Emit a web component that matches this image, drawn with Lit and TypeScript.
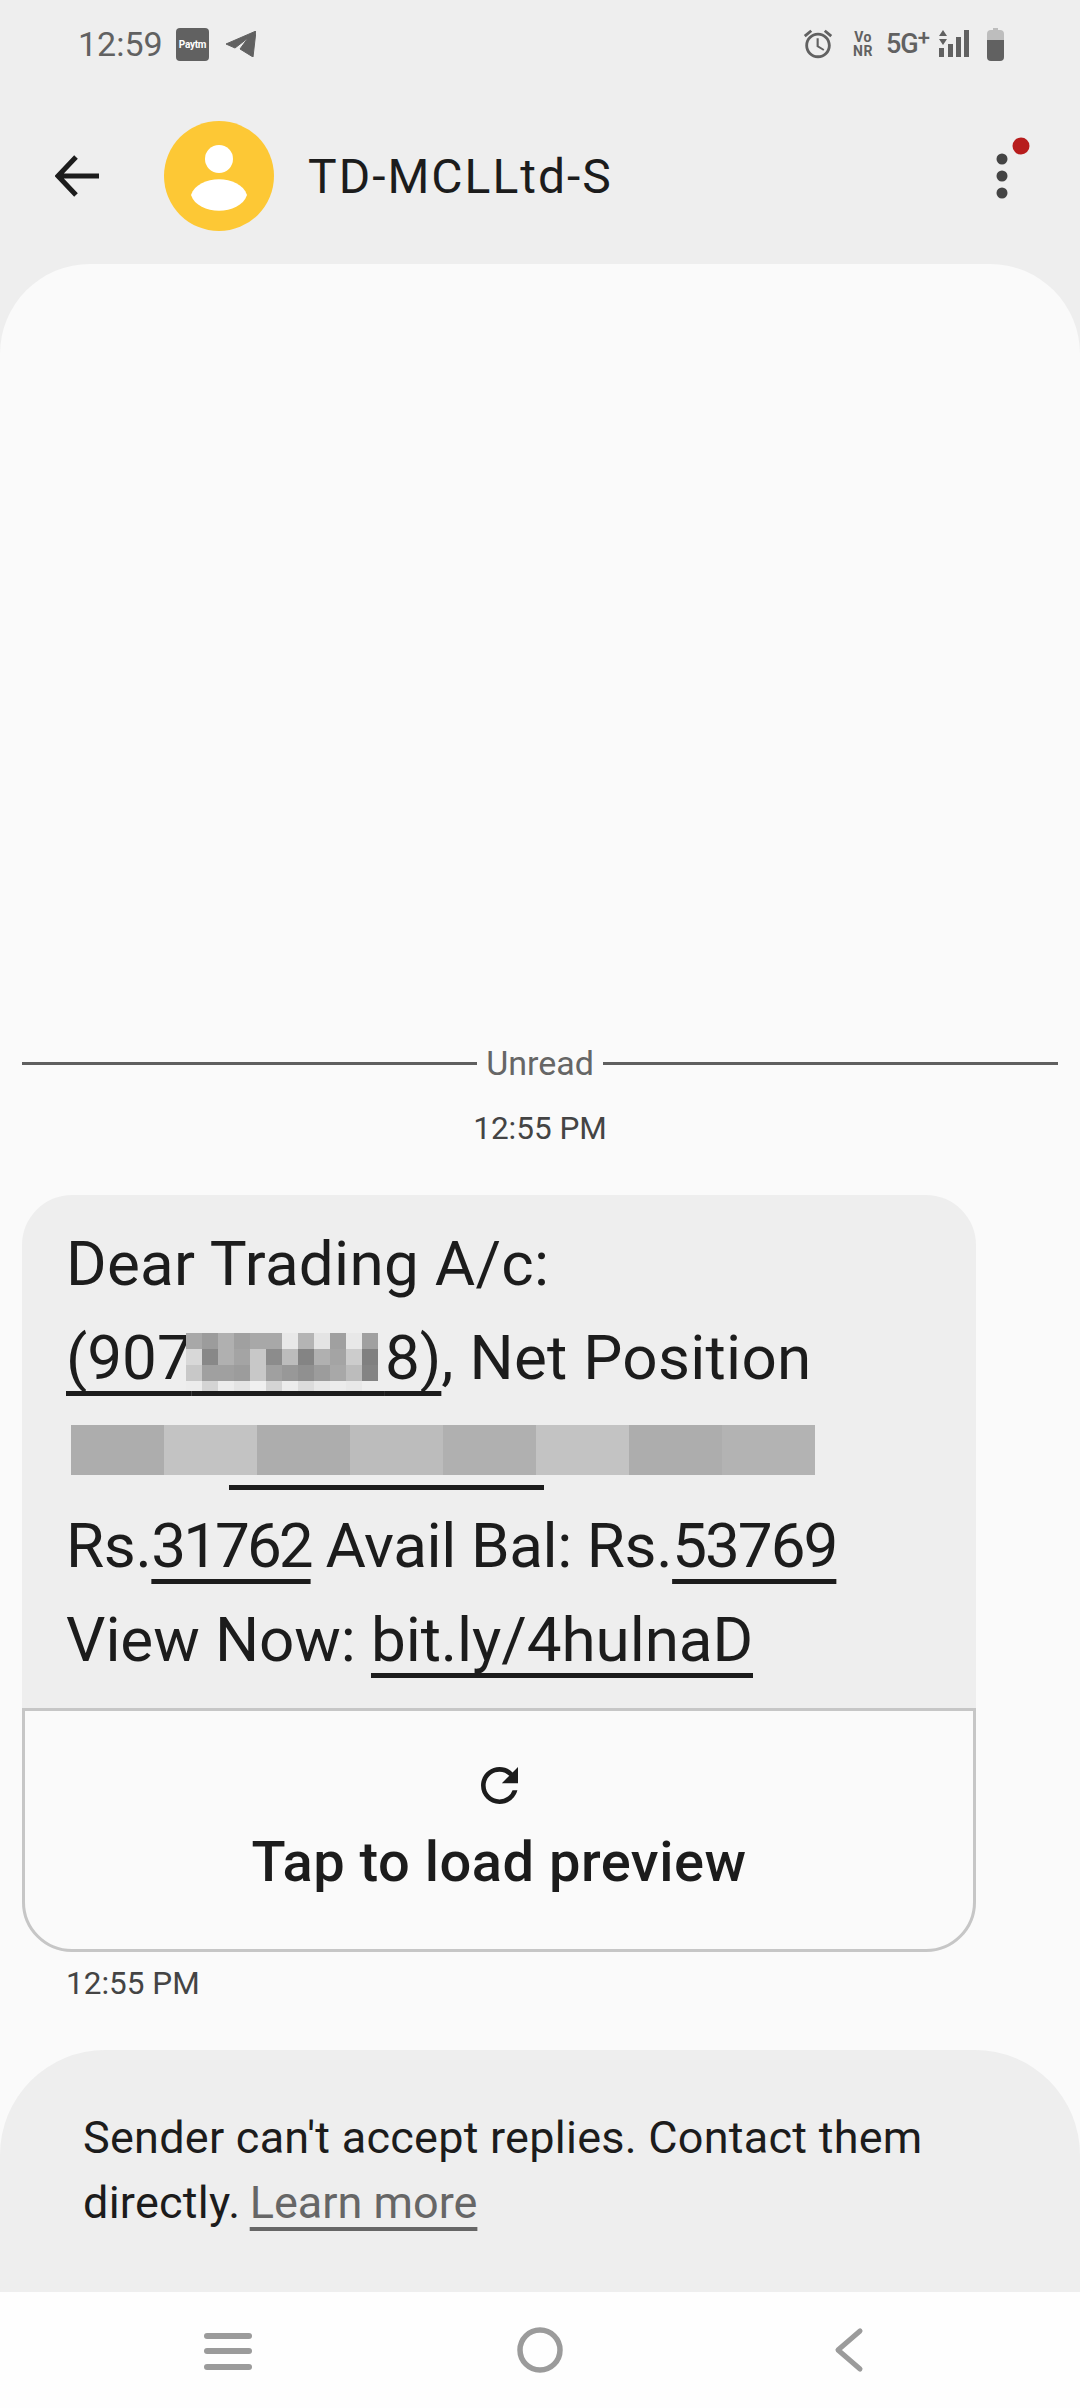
import { LitElement, html, css, svg } from "lit";
import { customElement } from "lit/decorators.js";

const PHONE_MOSAIC = [
  ["a8", "9c", "b0", "a0", "a8", "a8", "e8", "b4", "e4", "a0", "e8", "a0"],
  ["d8", "88", "b0", "a4", "c8", "8c", "bc", "84", "b0", "a4", "cc", "80"],
  ["c8", "a0", "a0", "9c", "c8", "a0", "98", "90", "9c", "a8", "bc", "84"],
  ["ec", "d4", "ec", "e4", "f0", "d4", "ec", "dc", "e8", "ec", "e8", "ee"],
];
const NET_MOSAIC = ["ad", "c3", "ad", "bc", "b0", "c3", "ad", "b3"];

const grey = (h: string) => `#${h}${h}${h}`;

@customElement("app-root")
export class AppRoot extends LitElement {
  static styles = css`
    :host {
      display: block;
      width: 1080px;
      height: 2408px;
      font-family: "Roboto", "Liberation Sans", sans-serif;
      color: #1c1c1c;
      background: #eeeeee;
    }
    .page {
      display: flex;
      flex-direction: column;
      height: 2408px;
    }
    svg {
      display: block;
      flex: none;
    }

    /* status bar */
    .status {
      height: 88px;
      display: flex;
      align-items: center;
      padding: 0 76px 0 78px;
      color: #616161;
    }
    .clock {
      font-size: 34px;
      width: 98px;
    }
    .paytm {
      width: 33px;
      height: 33px;
      border-radius: 4px;
      background: #616161;
      color: #fff;
      font-size: 10px;
      font-weight: 700;
      letter-spacing: -0.3px;
      display: flex;
      align-items: center;
      justify-content: center;
      margin-right: 17px;
    }
    .sys {
      margin-left: auto;
      display: flex;
      align-items: center;
    }
    .spacer {
      width: 18px;
    }
    .vonr {
      font-size: 14px;
      font-weight: 700;
      line-height: 14px;
      letter-spacing: 0.5px;
      text-align: center;
      margin: 0 12px 0 17px;
      width: 22px;
    }
    .vonr span {
      display: block;
    }
    .fiveg {
      font-size: 27px;
      font-weight: 500;
      letter-spacing: -1px;
      width: 42px;
      margin-right: 10px;
      white-space: nowrap;
    }
    .fiveg sup {
      font-size: 22px;
      line-height: 0;
      vertical-align: 8px;
    }

    /* header */
    .head {
      height: 176px;
      display: flex;
      align-items: center;
      padding-left: 55px;
    }
    .avatar {
      width: 110px;
      height: 110px;
      margin-left: 65px;
    }
    .title {
      font-size: 48px;
      margin-left: 34px;
      letter-spacing: 2px;
    }
    .menu {
      margin-left: auto;
      margin-right: 47px;
    }

    /* thread */
    .main {
      flex: 1;
      display: flex;
      flex-direction: column;
      background: #fafafa;
      border-radius: 90px 90px 0 0;
    }
    .thread {
      flex: 1;
      padding: 0 22px;
      display: flex;
      flex-direction: column;
      justify-content: flex-end;
      padding-bottom: 46px;
    }
    .divider {
      display: flex;
      align-items: center;
      gap: 9px;
      font-size: 34px;
      color: #666;
      line-height: 40px;
    }
    .divider i {
      flex: 1;
      height: 3px;
      background: #5f5f5f;
    }
    .stamp {
      font-size: 31.5px;
      color: #444;
      line-height: 40px;
      text-align: center;
      margin-top: 26px;
    }
    .bubble {
      width: 954px;
      margin-top: 46px;
      background: #eeeeee;
      border-radius: 50px;
    }
    .body {
      padding: 22px 30px 21px 44px;
      font-size: 62px;
      line-height: 94px;
    }
    .line {
      white-space: nowrap;
    }
    .wide {
      letter-spacing: 0.27px;
    }
    .tight {
      letter-spacing: -0.4px;
    }
    .snug {
      letter-spacing: -0.1px;
    }
    .link {
      text-decoration: underline;
      text-decoration-thickness: 5px;
      text-underline-offset: 12px;
      text-decoration-skip-ink: none;
    }
    .digits {
      letter-spacing: -3px;
    }
    .digits.loose {
      letter-spacing: -2px;
    }
    .masked {
      position: relative;
    }
    .gap {
      word-spacing: 49px;
    }
    .mosaic {
      position: absolute;
      left: 120px;
      top: 12px;
      display: grid;
      grid-template-columns: repeat(12, 16px);
      grid-template-rows: 16px 16px 16px 10px;
    }
    .redacted {
      height: 94px;
      padding-top: 20px;
      box-sizing: border-box;
    }
    .strip {
      display: flex;
      width: 744px;
      height: 50px;
      margin-left: 5px;
    }
    .strip i {
      flex: 1;
    }
    .bar {
      width: 315px;
      height: 5px;
      margin: 10px 0 0 163px;
      background: #1c1c1c;
    }
    .preview {
      box-sizing: border-box;
      height: 244px;
      background: #fafafa;
      border: 3px solid #c6c6c6;
      border-radius: 0 0 50px 50px;
      display: flex;
      flex-direction: column;
      align-items: center;
      padding-top: 56px;
    }
    .preview b {
      font-size: 56px;
      font-weight: 500;
      letter-spacing: 0.5px;
      line-height: 64px;
      margin-top: 26px;
    }
    .sent {
      font-size: 31.5px;
      color: #444;
      line-height: 40px;
      margin: 12px 0 0 44px;
    }

    /* reply notice */
    .notice {
      height: 242px;
      box-sizing: border-box;
      background: #eeeeee;
      border-radius: 105px 105px 0 0;
      padding: 55px 83px 0;
      font-size: 45px;
      letter-spacing: 0.25px;
      line-height: 65px;
    }
    .notice a {
      color: #666;
      letter-spacing: 0;
      margin-left: -2px;
      text-decoration: underline;
      text-decoration-thickness: 4px;
      text-underline-offset: 9px;
      text-decoration-skip-ink: none;
    }

    /* nav */
    .nav {
      height: 116px;
      background: #fefefe;
    }
    .nav svg {
      width: 1080px;
      height: 116px;
    }
  `;

  private icon(w: number, h: number, box: string, body: unknown) {
    return html`<svg width=${w} height=${h} viewBox=${box}>${body}</svg>`;
  }

  render() {
    return html`
      <div class="page">
        <div class="status">
          <span class="clock">12:59</span>
          <span class="paytm">Paytm</span>
          ${this.icon(30, 26, "0 0 30 26", svg`<path d="M0 13 30 0 27 26 14 18 22 7 9 17Z" fill="#616161" stroke="#616161" stroke-width="1" stroke-linejoin="round" />`)}
          <div class="sys">
            ${this.icon(34, 34, "0 0 24 24", svg`<path fill="#616161" d="M22 5.72l-4.6-3.86-1.29 1.53 4.6 3.86L22 5.72zM7.88 3.39L6.6 1.86 2 5.71l1.29 1.53 4.59-3.85zM12.5 8H11v6l4.75 2.85.75-1.23-4-2.37V8zM12 4c-4.97 0-9 4.03-9 9s4.03 9 9 9 9-4.03 9-9-4.03-9-9-9zm0 16c-3.87 0-7-3.13-7-7s3.13-7 7-7 7 3.13 7 7-3.13 7-7 7z" />`)}
            <div class="vonr"><span>Vo</span><span>NR</span></div>
            <span class="fiveg">5G<sup>+</sup></span>
            ${this.icon(31, 28, "0 0 31 28", svg`<g fill="#616161"><path d="M5 0 9 6H1ZM1 9H9L5 15ZM1 18H6V27H1ZM10 14H15V27H10ZM18 7H23V27H18ZM26 0H31V27H26Z" /></g>`)}
            <span class="spacer"></span>
            ${this.icon(17, 33, "0 0 17 33", svg`<path fill="#bdbdbd" d="M6 0H11V2H13A4 4 0 0 1 17 6V12H0V6A4 4 0 0 1 4 2H6Z" /><path fill="#616161" d="M0 12H17V29A4 4 0 0 1 13 33H4A4 4 0 0 1 0 29Z" />`)}
          </div>
        </div>

        <div class="head">
          ${this.icon(44, 44, "0 0 44 44", svg`<path d="M44 22H4M21 3 3 22 21 41" fill="none" stroke="#1c1c1c" stroke-width="5" />`)}
          <div class="avatar">
            ${this.icon(110, 110, "0 0 110 110", svg`<circle cx="55" cy="55" r="55" fill="#fdc835" /><circle cx="55" cy="38" r="14" fill="#fff" /><path d="M27 74C34 53 76 53 83 74 76 95 34 95 27 74Z" fill="#fff" />`)}
          </div>
          <span class="title">TD-MCLLtd-S</span>
          <div class="menu">
            ${this.icon(40, 80, "0 0 40 80", svg`<g fill="#444"><circle cx="9" cy="23" r="5.5" /><circle cx="9" cy="40" r="5.5" /><circle cx="9" cy="57" r="5.5" /></g><circle cx="28" cy="10" r="8.5" fill="#b71c1c" />`)}
          </div>
        </div>

        <div class="main">
          <div class="thread">
            <div class="divider"><i></i><span>Unread</span><i></i></div>
            <div class="stamp">12:55 PM</div>
            <div class="bubble">
              <div class="body">
                <div class="line wide">Dear Trading A/c:</div>
                <div class="line">
                  <span class="link masked"
                    >(907<span class="gap">&nbsp; &nbsp;</span>8)<span class="mosaic">
                      ${PHONE_MOSAIC.flat().map((c) => html`<i style="background:${grey(c)}"></i>`)}
                    </span></span
                  ><span class="wide">, Net Position</span>
                </div>
                <div class="redacted">
                  <div class="strip">
                    ${NET_MOSAIC.map((c) => html`<i style="background:${grey(c)}"></i>`)}
                  </div>
                  <div class="bar"></div>
                </div>
                <div class="line tight">
                  Rs.<span class="link digits">31762</span> Avail Bal: Rs.<span class="link digits loose">53769</span>
                </div>
                <div class="line snug">View Now: <span class="link">bit.ly/4hulnaD</span></div>
              </div>
              <div class="preview">
                ${this.icon(37, 37, "4 4 16 16", svg`<path fill="#1c1c1c" d="M17.65 6.35A7.958 7.958 0 0 0 12 4c-4.42 0-7.99 3.58-7.99 8s3.57 8 7.99 8c3.73 0 6.84-2.55 7.73-6h-2.08A5.99 5.99 0 0 1 12 18c-3.31 0-6-2.69-6-6s2.69-6 6-6c1.66 0 3.14.69 4.22 1.78L13 11h7V4l-2.35 2.35z" />`)}
                <b>Tap to load preview</b>
              </div>
            </div>
            <div class="sent">12:55 PM</div>
          </div>
          <div class="notice">
            Sender can't accept replies. Contact them<br />
            directly. <a>Learn more</a>
          </div>
        </div>

        <div class="nav">
          <svg viewBox="0 0 1080 116">
            <g fill="#9b9b9b">
              <rect x="204" y="41" width="48" height="6" rx="3" />
              <rect x="204" y="56" width="48" height="6" rx="3" />
              <rect x="204" y="72" width="48" height="6" rx="3" />
            </g>
            <circle cx="540" cy="58" r="20" fill="none" stroke="#9b9b9b" stroke-width="5.5" />
            <path d="M860 39 838 58 860 77" fill="none" stroke="#9b9b9b" stroke-width="5" stroke-linecap="round" stroke-linejoin="round" />
          </svg>
        </div>
      </div>
    `;
  }
}
